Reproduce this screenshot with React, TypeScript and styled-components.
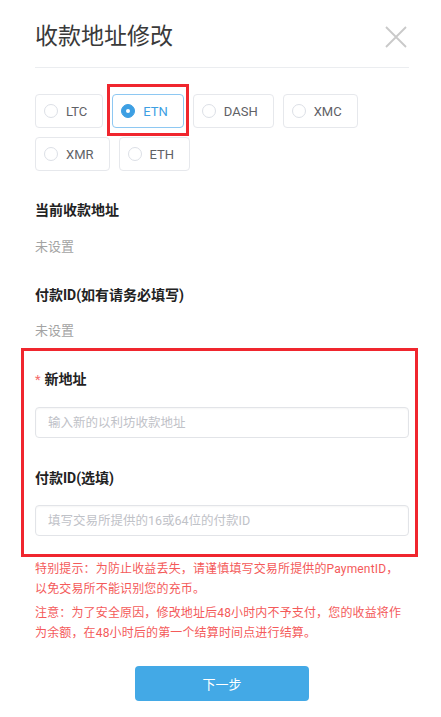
import React from "react";
import styled, { createGlobalStyle, css } from "styled-components";

const GlobalStyle = createGlobalStyle`
  html, body {
    margin: 0;
    padding: 0;
    background: #ffffff;
  }
  body {
    font-family: Roboto, "Noto Sans CJK SC", sans-serif;
    color: #333;
  }
  * { box-sizing: border-box; }
`;

const Page = styled.div`
  padding: 0 32px 24px 35px;
`;

const Header = styled.div`
  display: flex;
  align-items: center;
  justify-content: space-between;
  padding: 25px 0 18px;
  border-bottom: 1px solid #ebedf0;
`;

const Title = styled.h1`
  margin: 0;
  font-size: 23px;
  line-height: 24px;
  font-weight: 400;
  color: #3a3a3a;
`;

const CloseButton = styled.button`
  width: 22px;
  height: 22px;
  margin-right: 2px;
  padding: 0;
  border: none;
  background: none;
  display: flex;
  cursor: pointer;
`;

const Chips = styled.div`
  margin-top: 26px;
  display: flex;
  flex-wrap: wrap;
  gap: 9px;
`;

const Chip = styled.label<{ $active?: boolean; $mark?: boolean }>`
  position: relative;
  display: flex;
  align-items: center;
  height: 34px;
  padding: 0 15px 0 8px;
  border: 1px solid ${(p) => (p.$active ? "#8ec8f2" : "#e6e8ec")};
  border-radius: 4px;
  font-size: 13px;
  color: ${(p) => (p.$active ? "#3d9fe3" : "#5f6166")};
  cursor: pointer;
  ${(p) =>
    p.$mark &&
    css`
      &::after {
        content: "";
        position: absolute;
        top: -11px;
        bottom: -9px;
        left: -6px;
        right: -6px;
        border: 3px solid #f0262e;
        pointer-events: none;
      }
    `}
`;

const RadioDot = styled.span<{ $active?: boolean }>`
  width: 14px;
  height: 14px;
  margin-right: 8px;
  border-radius: 50%;
  flex: none;
  border: 1px solid ${(p) => (p.$active ? "#3d9fe3" : "#dcdfe6")};
  background: ${(p) => (p.$active ? "#3d9fe3" : "#fff")};
  display: flex;
  align-items: center;
  justify-content: center;
  &::after {
    content: "";
    width: 4px;
    height: 4px;
    border-radius: 50%;
    background: #fff;
    display: ${(p) => (p.$active ? "block" : "none")};
  }
`;

const Label = styled.div<{ $gap: number }>`
  margin-top: ${(p) => p.$gap}px;
  font-size: 14px;
  line-height: 20px;
  font-weight: 700;
  color: #222;
`;

const Required = styled.span`
  color: #f56c6c;
  font-weight: 400;
  margin-right: 4px;
  font-size: 13px;
`;

const Value = styled.div<{ $gap: number }>`
  margin-top: ${(p) => p.$gap}px;
  font-size: 13px;
  line-height: 20px;
  color: #a3a3a3;
`;

const Highlight = styled.section`
  margin: 7px -9px 0 -14px;
  padding: 18px 6px 18px 11px;
  border: 3px solid #f0262e;
`;

const Input = styled.input`
  display: block;
  width: 100%;
  height: 31px;
  margin-top: 17px;
  padding: 0 12px;
  border: 1px solid #e2e4e8;
  border-radius: 4px;
  box-shadow: inset 0 1px 2px rgba(0, 0, 0, 0.04);
  font-family: inherit;
  font-size: 12.5px;
  color: #333;
  outline: none;
  &::placeholder {
    color: #bfc2c8;
  }
`;

const Notes = styled.div`
  margin-top: 2px;
  color: #f45a5a;
  font-size: 12px;
  line-height: 20px;
  letter-spacing: 0.15px;
`;

const Note = styled.p`
  margin: 0 0 4px;
`;

const NoteLine = styled.span`
  display: block;
  white-space: nowrap;
`;

const Footer = styled.div`
  margin-top: 23px;
  display: flex;
  justify-content: center;
`;

const NextButton = styled.button`
  width: 174px;
  height: 35px;
  border: none;
  border-radius: 4px;
  background: #43a9e6;
  color: #fff;
  font-family: inherit;
  font-size: 13px;
  cursor: pointer;
`;

const coins = ["LTC", "ETN", "DASH", "XMC", "XMR", "ETH"];

export default function App() {
  const selected = "ETN";
  return (
    <>
      <GlobalStyle />
      <Page>
        <Header>
          <Title>收款地址修改</Title>
          <CloseButton aria-label="关闭">
            <svg width="22" height="22" viewBox="0 0 22 22">
              <path d="M1 1 L21 21 M21 1 L1 21" stroke="#c9c9c9" strokeWidth="1.8" fill="none" />
            </svg>
          </CloseButton>
        </Header>

        <Chips>
          {coins.map((c) => (
            <Chip key={c} $active={c === selected} $mark={c === selected}>
              <RadioDot $active={c === selected} />
              {c}
            </Chip>
          ))}
        </Chips>

        <Label $gap={29}>当前收款地址</Label>
        <Value $gap={17}>未设置</Value>
        <Label $gap={28}>付款ID(如有请务必填写)</Label>
        <Value $gap={16}>未设置</Value>

        <Highlight>
          <Label $gap={0}>
            <Required>*</Required>新地址
          </Label>
          <Input placeholder="输入新的以利坊收款地址" />
          <Label $gap={30}>付款ID(选填)</Label>
          <Input placeholder="填写交易所提供的16或64位的付款ID" />
        </Highlight>

        <Notes>
          <Note>
            <NoteLine>特别提示：为防止收益丢失，请谨慎填写交易所提供的PaymentID，</NoteLine>
            <NoteLine>以免交易所不能识别您的充币。</NoteLine>
          </Note>
          <Note>
            <NoteLine>注意：为了安全原因，修改地址后48小时内不予支付，您的收益将作</NoteLine>
            <NoteLine>为余额，在48小时后的第一个结算时间点进行结算。</NoteLine>
          </Note>
        </Notes>

        <Footer>
          <NextButton>下一步</NextButton>
        </Footer>
      </Page>
    </>
  );
}
